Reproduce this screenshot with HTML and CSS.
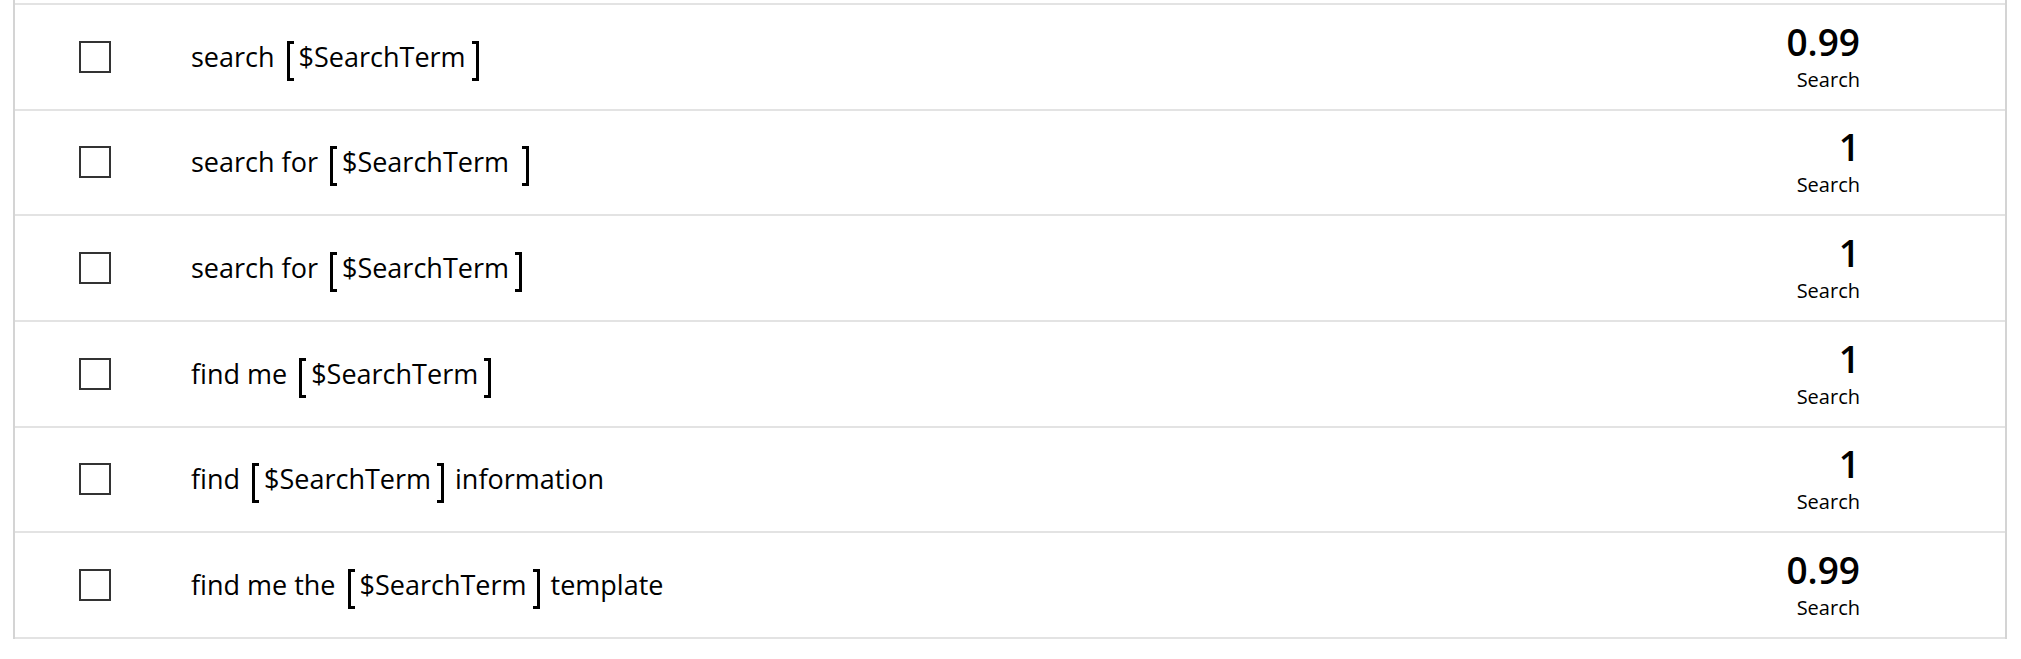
FILE: index.html
```html
<!DOCTYPE html>
<html lang="en">
<head>
<meta charset="utf-8">
<title>Utterances</title>
<link rel="stylesheet" href="styles.css">
</head>
<body>
<div class="table">
  <div class="cutoff"></div>
  <div class="row">
    <div class="cell-check"><span class="checkbox"></span></div>
    <div class="cell-text">search <span class="br br-l"></span>$SearchTerm<span class="br br-r"></span></div>
    <div class="cell-score"><div class="score">0.99</div><div class="intent">Search</div></div>
  </div>
  <div class="row">
    <div class="cell-check"><span class="checkbox"></span></div>
    <div class="cell-text">search for <span class="br br-l"></span>$SearchTerm <span class="br br-r"></span></div>
    <div class="cell-score"><div class="score">1</div><div class="intent">Search</div></div>
  </div>
  <div class="row">
    <div class="cell-check"><span class="checkbox"></span></div>
    <div class="cell-text">search for <span class="br br-l"></span>$SearchTerm<span class="br br-r"></span></div>
    <div class="cell-score"><div class="score">1</div><div class="intent">Search</div></div>
  </div>
  <div class="row">
    <div class="cell-check"><span class="checkbox"></span></div>
    <div class="cell-text">find me <span class="br br-l"></span>$SearchTerm<span class="br br-r"></span></div>
    <div class="cell-score"><div class="score">1</div><div class="intent">Search</div></div>
  </div>
  <div class="row">
    <div class="cell-check"><span class="checkbox"></span></div>
    <div class="cell-text">find <span class="br br-l"></span>$SearchTerm<span class="br br-r"></span> information</div>
    <div class="cell-score"><div class="score">1</div><div class="intent">Search</div></div>
  </div>
  <div class="row">
    <div class="cell-check"><span class="checkbox"></span></div>
    <div class="cell-text">find me the <span class="br br-l"></span>$SearchTerm<span class="br br-r"></span> template</div>
    <div class="cell-score"><div class="score">0.99</div><div class="intent">Search</div></div>
  </div>
</div>
</body>
</html>
```

FILE: styles.css
```css
html, body {
  margin: 0;
  padding: 0;
  background: #ffffff;
}

body {
  font-family: "Open Sans", "Noto Sans", "Liberation Sans", sans-serif;
  color: #000000;
}

.table {
  margin: 0 14px 0 13px;
  border-left: 2px solid #d4d4d4;
  border-right: 2px solid #d4d4d4;
}

.cutoff {
  height: 3px;
  border-bottom: 2px solid #e3e3e3;
}

.row {
  display: flex;
  align-items: center;
  height: 103.67px;
  border-bottom: 2px solid #e3e3e3;
}

.cell-check {
  padding-left: 64px;
  display: flex;
  align-items: center;
}

.checkbox {
  display: block;
  width: 32px;
  height: 32px;
  box-sizing: border-box;
  border: 2px solid #333333;
}

.cell-text {
  flex: 1;
  margin-left: 80px;
  padding-top: 5px;
  font-size: 27px;
  white-space: pre;
}

.br {
  display: inline-block;
  width: 7px;
  height: 40px;
  box-sizing: border-box;
  border: 3px solid #000000;
  vertical-align: -14px;
}

.br-l {
  border-right: none;
  margin-left: 5px;
  margin-right: 5px;
}

.br-r {
  border-left: none;
  margin-left: 6px;
  margin-right: 4px;
}

.cell-score {
  padding-right: 145px;
  padding-top: 2px;
  text-align: right;
}

.score {
  font-size: 37px;
  font-weight: 600;
  line-height: 40px;
}

.intent {
  font-size: 20px;
  line-height: 28px;
  margin-top: 4px;
}
```
